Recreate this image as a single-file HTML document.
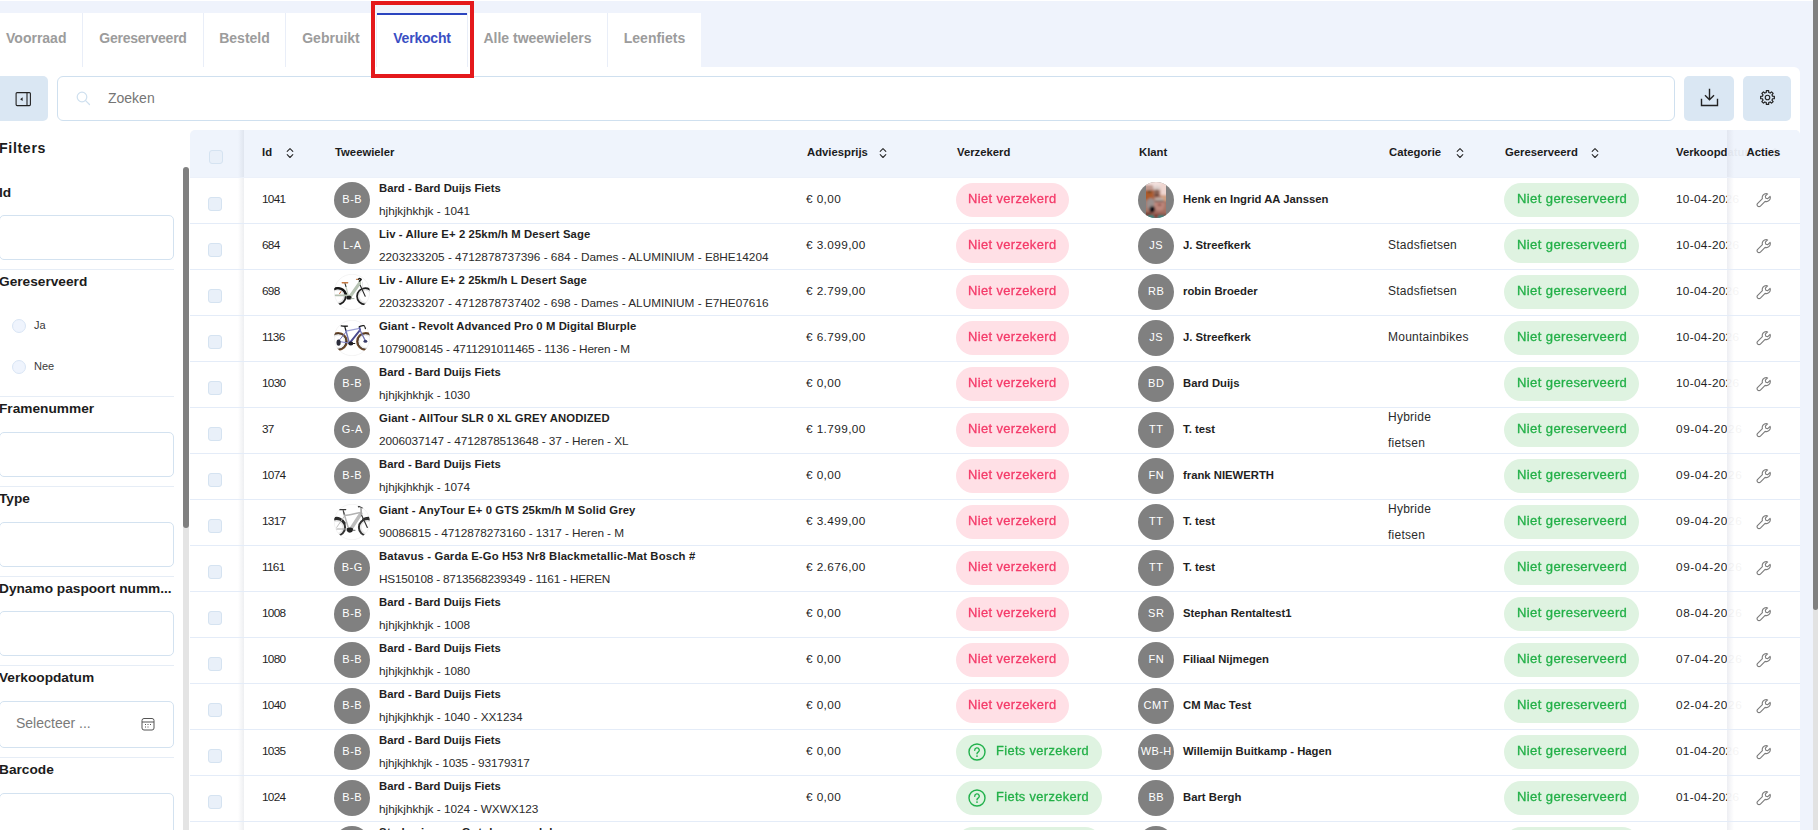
<!DOCTYPE html>
<html lang="nl"><head><meta charset="utf-8"><title>Verkocht</title>
<style>
*{box-sizing:border-box;margin:0;padding:0}
html,body{width:1818px;height:830px;overflow:hidden}
body{position:relative;background:#eff3fc;font-family:"Liberation Sans",Arial,sans-serif;color:#1f1f1f;-webkit-font-smoothing:antialiased}
.abs{position:absolute}
#topw{left:0;top:0;width:1818px;height:1px;background:#fff}
#vsb{left:1813px;top:0;width:5px;height:830px;background:#e2e2e2}
#vsb i{display:block;width:5px;height:610px;background:#808080;border-radius:0 0 3px 3px}
#tabs{left:0;top:13px;height:54px;width:701px;background:#fff;display:flex;overflow:hidden}
.tab{height:54px;border-right:1px solid #e9eef8;font-size:14px;font-weight:700;color:#9c9c9c;text-align:center;line-height:51px;white-space:nowrap;position:relative}
.tab.on{color:#3a4fc3}
.tab.on:before{content:"";position:absolute;left:0;right:0;top:0;height:2px;background:#2b45bf}
#redbox{left:371px;top:1px;width:103px;height:77px;border:4px solid #e4191c;z-index:5}
#card{left:0;top:67px;width:1800px;height:763px;background:#fff;border-radius:0 6px 0 0}
.btn{background:#dae7f3;border-radius:5px;top:76px;height:45px}
#search{left:57px;top:76px;width:1618px;height:45px;border:1px solid #cfe0ef;border-radius:6px;background:#fff}
#search span{position:absolute;left:50px;top:0;line-height:42px;font-size:14px;color:#757575}
/* sidebar */
#side{left:0;top:130px;width:182px;height:700px;overflow:hidden}
.lbl{position:absolute;left:-1px;font-weight:700;font-size:13.7px;margin-top:1px;white-space:nowrap;color:#1c1c1c}
.inp{position:absolute;left:-1px;width:175px;height:45px;border:1px solid #d3e2f0;border-radius:5px;background:#fff}
.sep{position:absolute;left:0;width:174px;height:1px;background:#e6edf6}
.rad{position:absolute;left:12px;width:14px;height:14px;border-radius:50%;background:#eff4fd;border:1px solid #d9e5f5}
.rl{position:absolute;left:34px;font-size:11px;color:#3a3a3a}
#sst{left:183px;top:170px;width:6px;height:660px;background:#e4e4e4}
#ssb{left:183px;top:167px;width:6px;height:361px;background:#808080;border-radius:3px}
/* table */
#tbl{left:190px;top:130px;width:1610px;height:700px;overflow:hidden;border-radius:5px 5px 0 0}
.th{position:relative;height:48px;background:#eff4fc;border-bottom:1px solid #ecf1fa;font-weight:700;font-size:11.3px;color:#1c1c1c}
.th .c{line-height:44px;white-space:nowrap}
.tr{position:relative;height:46px;border-bottom:1px solid #e4ecf8;background:#fff;font-size:11.8px}
.c{position:absolute;top:0;height:100%;white-space:nowrap}
.cb{left:0;width:54px;background:linear-gradient(90deg,rgba(255,255,255,0) 48px,rgba(120,130,150,.13) 54px)}
.th .cb{background:linear-gradient(90deg,rgba(234,240,250,0) 48px,rgba(120,130,150,.13) 54px)}
.chk{position:absolute;left:18px;top:19px;width:14px;height:14px;border-radius:3px;background:#e9f0f9;border:1px solid #d5e3f1}
.th .chk{left:19px;top:20px}
.id{left:72px;line-height:43px;letter-spacing:-.7px}
.tw{left:144px}
.av{position:absolute;left:0;top:4px;width:36px;height:36px;border-radius:50%;background:#808080;color:#fff;font-size:11px;font-weight:400;text-align:center;line-height:35px;letter-spacing:.5px;text-indent:.5px}
.av.sm{letter-spacing:.4px;text-indent:.4px}
.bk{position:absolute;left:0;top:4px}
.tt{position:absolute;left:45px;top:0}
.tt b{display:block;font-size:11.3px;line-height:23px;height:23px;margin-top:-1px}
.tt span{display:block;line-height:23px;color:#2b2b2b}
.pr{left:616px;line-height:43px;letter-spacing:.4px}
.vz{left:766px}
.pill{position:absolute;left:0;top:5px;height:34px;border-radius:17px;white-space:nowrap}
.pill em{position:absolute;left:12.300px;top:0;font-style:normal;display:block;line-height:33.500px;font-size:12px;letter-spacing:.35px;transform:scaleX(1.075);transform-origin:0 50%;-webkit-text-stroke:.3px currentColor}
.pill.red{background:#ffe0e6;color:#f43a69;width:113px}
.pill.grn{background:#dff3e1;color:#23b048;width:135px}
.pill.grn em{left:12.600px;transform:scaleX(1.088)}
.pill.ic{width:146px}
.pill.ic em{left:39.800px;transform:scaleX(1.066)}
.qi{position:absolute;left:12px;top:8px}
.kl{left:948px}
.kl b{position:absolute;left:45px;top:0;line-height:43px;font-size:11.3px}
.ct{left:1198px;line-height:43px;font-size:12px;letter-spacing:.25px;color:#2b2b2b}
.ct.two{line-height:26px;top:-4.200px}
.gr{left:1314px}
.dt{left:1486px;line-height:43px;letter-spacing:.3px}
.ac{left:1537px;width:73px;background:linear-gradient(90deg,rgba(236,237,242,.95),rgba(255,255,255,.95) 7px)}
.th .ac{background:linear-gradient(90deg,rgba(226,230,240,.95),rgba(239,244,252,.95) 7px)}
.wr{position:absolute;left:29.400px;top:14px}
.so{position:absolute;top:16.750px}
</style></head><body>
<div class="abs" id="topw"></div>
<div class="abs" id="tabs">
<div class="tab" style="width:92.500px;margin-left:-9.500px">Voorraad</div><div class="tab" style="width:121px;letter-spacing:-.25px">Gereserveerd</div><div class="tab" style="width:82px">Besteld</div><div class="tab" style="width:91px">Gebruikt</div><div class="tab on" style="width:91px;letter-spacing:-.2px">Verkocht</div><div class="tab" style="width:140px">Alle tweewielers</div><div class="tab" style="width:93px;border-right:0">Leenfiets</div>
</div>
<div class="abs" id="card"></div>
<div class="abs" id="redbox"></div>
<div class="abs btn" style="left:0;width:48px;border-radius:0 5px 5px 0"><svg class="abs" style="left:15px;top:15px" width="17" height="16" viewBox="0 0 17 16"><rect x="1.100" y="1.600" width="14.300" height="13" rx="1" fill="none" stroke="#222" stroke-width="1.100"/><path d="M12 1.600v13" stroke="#222" stroke-width="1.100"/><path d="M7.600 6.300v3.800l-2.500-1.900z" fill="#222"/></svg></div>
<div class="abs" id="search"><svg class="abs" style="left:18px;top:14px" width="15" height="15" viewBox="0 0 15 15"><circle cx="6" cy="6" r="4.800" fill="none" stroke="#cfe0ef" stroke-width="1.200"/><path d="M9.600 9.600 13.500 13.500" stroke="#cfe0ef" stroke-width="1.200" stroke-linecap="round"/></svg><span>Zoeken</span></div>
<div class="abs btn" style="left:1684px;width:50px"><svg class="abs" style="left:16px;top:12px" width="19" height="19" viewBox="0 0 19 19"><path d="M9.500 1.500v10M5.500 7.800l4 4 4-4M1.500 11.500v6h16v-6" fill="none" stroke="#222" stroke-width="1.400" stroke-linecap="square"/></svg></div>
<div class="abs btn" style="left:1743px;width:48px"><svg class="abs" style="left:15.500px;top:13.200px" width="17" height="17" viewBox="0 0 17 17"><circle cx="8.500" cy="8.500" r="2.250" fill="none" stroke="#222" stroke-width="1.150"/><path d="M7.250 3.450 L7.350 1.650 L9.650 1.650 L9.750 3.450 L11.200 4.050 L12.550 2.850 L14.150 4.450 L12.950 5.800 L13.550 7.250 L15.350 7.350 L15.350 9.650 L13.550 9.750 L12.950 11.200 L14.150 12.550 L12.550 14.150 L11.200 12.950 L9.750 13.550 L9.650 15.350 L7.350 15.350 L7.250 13.550 L5.800 12.950 L4.450 14.150 L2.850 12.550 L4.050 11.200 L3.450 9.750 L1.650 9.650 L1.650 7.350 L3.450 7.250 L4.050 5.800 L2.850 4.450 L4.450 2.850 L5.800 4.050Z" fill="none" stroke="#222" stroke-width="1.200" stroke-linejoin="round"/></svg></div>

<div class="abs" id="side">
<div class="lbl" style="top:9px;font-size:14.200px;letter-spacing:.65px">Filters</div>
<div class="lbl" style="top:54px">Id</div>
<div class="inp" style="top:85px"></div>
<div class="sep" style="top:139px"></div>
<div class="lbl" style="top:143px">Gereserveerd</div>
<i class="rad" style="top:189px"></i><span class="rl" style="top:189px">Ja</span>
<i class="rad" style="top:230px"></i><span class="rl" style="top:230px">Nee</span>
<div class="sep" style="top:266px"></div>
<div class="lbl" style="top:270px">Framenummer</div>
<div class="inp" style="top:302px"></div>
<div class="sep" style="top:356px"></div>
<div class="lbl" style="top:360px">Type</div>
<div class="inp" style="top:392px"></div>
<div class="sep" style="top:446px"></div>
<div class="lbl" style="top:450px">Dynamo paspoort numm...</div>
<div class="inp" style="top:481px"></div>
<div class="sep" style="top:535px"></div>
<div class="lbl" style="top:539px">Verkoopdatum</div>
<div class="inp" style="top:571px;height:47px"><span style="position:absolute;left:16px;top:0;line-height:42px;font-size:14px;color:#7a7a7a">Selecteer ...</span><svg class="abs" style="left:141px;top:15px" width="14" height="14" viewBox="0 0 14 14"><rect x="1" y="1.500" width="12" height="11.500" rx="2" fill="none" stroke="#555" stroke-width="1"/><path d="M1 5h12" stroke="#555" stroke-width="1"/><path d="M4 7.500h1M6.500 7.500h1M9 7.500h1M4 10h1M6.500 10h1" stroke="#555" stroke-width="1.100"/></svg></div>
<div class="sep" style="top:627px"></div>
<div class="lbl" style="top:631px">Barcode</div>
<div class="inp" style="top:663px"></div>
</div>
<div class="abs" id="sst"></div><div class="abs" id="ssb"></div>

<div class="abs" id="tbl">
<div class="th"><div class="c cb"><i class="chk"></i></div><div class="c" style="left:72px">Id<svg class="so" style="left:23.9px" viewBox="0 0 8 12" width="8" height="12"><path d="M1.200 4.400 4 1.600 6.800 4.400M1.200 7.700 4 10.500 6.800 7.700" fill="none" stroke="#2a2a2a" stroke-width="1.100" stroke-linecap="round" stroke-linejoin="round"/></svg></div><div class="c" style="left:145px">Tweewieler</div><div class="c" style="left:617px">Adviesprijs<svg class="so" style="left:71.7px" viewBox="0 0 8 12" width="8" height="12"><path d="M1.200 4.400 4 1.600 6.800 4.400M1.200 7.700 4 10.500 6.800 7.700" fill="none" stroke="#2a2a2a" stroke-width="1.100" stroke-linecap="round" stroke-linejoin="round"/></svg></div><div class="c" style="left:767px">Verzekerd</div><div class="c" style="left:949px">Klant</div><div class="c" style="left:1199px">Categorie<svg class="so" style="left:66.7px" viewBox="0 0 8 12" width="8" height="12"><path d="M1.200 4.400 4 1.600 6.800 4.400M1.200 7.700 4 10.500 6.800 7.700" fill="none" stroke="#2a2a2a" stroke-width="1.100" stroke-linecap="round" stroke-linejoin="round"/></svg></div><div class="c" style="left:1315px">Gereserveerd<svg class="so" style="left:85.7px" viewBox="0 0 8 12" width="8" height="12"><path d="M1.200 4.400 4 1.600 6.800 4.400M1.200 7.700 4 10.500 6.800 7.700" fill="none" stroke="#2a2a2a" stroke-width="1.100" stroke-linecap="round" stroke-linejoin="round"/></svg></div><div class="c" style="left:1486px">Verkoopdatum<svg class="so" style="left:94.6px" viewBox="0 0 8 12" width="8" height="12"><path d="M1.200 4.400 4 1.600 6.800 4.400M1.200 7.700 4 10.500 6.800 7.700" fill="none" stroke="#2a2a2a" stroke-width="1.100" stroke-linecap="round" stroke-linejoin="round"/></svg></div><div class="c ac"><span style="position:absolute;left:19.500px">Acties</span></div></div>
<div class="tr"><div class="c cb"><i class="chk"></i></div><div class="c id">1041</div><div class="c tw"><span class="av">B-B</span><div class="tt"><b>Bard - Bard Duijs Fiets</b><span>hjhjkjhkhjk - 1041</span></div></div><div class="c pr">€ 0,00</div><div class="c vz"><span class="pill red"><em>Niet verzekerd</em></span></div><div class="c kl"><svg class="bk" viewBox="0 0 36 36" width="36" height="36"><defs><clipPath id="pc"><circle cx="18" cy="18" r="18"/></clipPath><filter id="bl" x="-20%" y="-20%" width="140%" height="140%"><feGaussianBlur stdDeviation="0.8"/></filter><clipPath id="ps"><rect x="8" y="0" width="20" height="36"/></clipPath></defs>
<g clip-path="url(#pc)"><rect width="36" height="36" fill="#808080"/><g clip-path="url(#ps)"><g filter="url(#bl)">
<rect x="5" y="-3" width="26" height="42" fill="#a87565"/>
<rect x="5" y="-3" width="26" height="8.500" fill="#f2dfdc"/>
<rect x="22.300" y="1" width="9" height="12.500" fill="#efd5cf"/>
<rect x="23" y="13.500" width="8" height="5.500" fill="#d39f7e"/>
<rect x="5" y="3" width="10" height="5.500" fill="#c09a90"/>
<rect x="5" y="8.500" width="10.500" height="9.500" fill="#ad5a2a"/>
<rect x="9.800" y="8.800" width="3.400" height="1.800" fill="#3e3e26"/>
<ellipse cx="19" cy="6.200" rx="3.700" ry="2.500" fill="#dccfcc"/>
<ellipse cx="18.800" cy="10.800" rx="3" ry="3.600" fill="#a47a6b"/>
<ellipse cx="18.600" cy="12.900" rx="2.400" ry="1.900" fill="#6a463c"/>
<ellipse cx="18.600" cy="9.300" rx="2.500" ry=".8" fill="#5c403a"/>
<ellipse cx="12.800" cy="22" rx="4.300" ry="6" fill="#9a908e"/>
<ellipse cx="21.300" cy="23" rx="5.200" ry="6.300" fill="#bd877c"/>
<ellipse cx="21.300" cy="17.400" rx="4.600" ry="1.900" fill="#c4b2aa"/>
<path d="M17 19.300h8.500" stroke="#4a3834" stroke-width="1.200"/>
<ellipse cx="21.500" cy="22.800" rx="2" ry="1.100" fill="#8f4a48"/>
<ellipse cx="14.300" cy="27.500" rx="2.800" ry="3.200" fill="#0d0a12"/>
<rect x="16" y="28.800" width="12" height="4" fill="#a26a5e"/>
<rect x="5" y="30.500" width="8" height="8" fill="#6a3028"/>
<rect x="5" y="32" width="26" height="8" fill="#7d3c32"/>
<rect x="9" y="33.300" width="18" height="4" fill="#2f8a84"/>
<rect x="16" y="33" width="4" height="3" fill="#8a3c34"/>
</g></g></g></svg><b>Henk en Ingrid AA Janssen</b></div><div class="c ct"></div><div class="c gr"><span class="pill grn"><em>Niet gereserveerd</em></span></div><div class="c dt">10-04-2026</div><div class="c ac"><svg class="wr" viewBox="0 0 16 16" width="16" height="16"><path d="M10.3 1.6a4 4 0 0 0-3.9 5.1L1.7 11.4a1.9 1.9 0 0 0 2.7 2.7l4.7-4.7a4 4 0 0 0 5-5l-2.3 2.3-2-.5-.5-2 2.3-2.3a4 4 0 0 0-1.3-.3z" fill="none" stroke="#7b7b7b" stroke-width="1.1" stroke-linejoin="round"/></svg></div></div>
<div class="tr"><div class="c cb"><i class="chk"></i></div><div class="c id">684</div><div class="c tw"><span class="av">L-A</span><div class="tt"><b style="letter-spacing:0.095px">Liv - Allure E+ 2 25km/h M Desert Sage</b><span>2203233205 - 4712878737396 - 684 - Dames - ALUMINIUM - E8HE14204</span></div></div><div class="c pr">€ 3.099,00</div><div class="c vz"><span class="pill red"><em>Niet verzekerd</em></span></div><div class="c kl"><span class="av">JS</span><b>J. Streefkerk</b></div><div class="c ct">Stadsfietsen</div><div class="c gr"><span class="pill grn"><em>Niet gereserveerd</em></span></div><div class="c dt">10-04-2026</div><div class="c ac"><svg class="wr" viewBox="0 0 16 16" width="16" height="16"><path d="M10.3 1.6a4 4 0 0 0-3.9 5.1L1.7 11.4a1.9 1.9 0 0 0 2.7 2.7l4.7-4.7a4 4 0 0 0 5-5l-2.3 2.3-2-.5-.5-2 2.3-2.3a4 4 0 0 0-1.3-.3z" fill="none" stroke="#7b7b7b" stroke-width="1.1" stroke-linejoin="round"/></svg></div></div>
<div class="tr"><div class="c cb"><i class="chk"></i></div><div class="c id">698</div><div class="c tw"><svg class="bk" viewBox="0 0 36 36" width="36" height="36"><defs><clipPath id="bc"><circle cx="18" cy="18" r="17.8"/></clipPath></defs><circle cx="18" cy="18" r="17.7" fill="#fff" stroke="#e9e9e9" stroke-width=".5"/><g clip-path="url(#bc)" fill="none" stroke-linecap="round" stroke-linejoin="round">
<circle cx="3.5" cy="22.300" r="7" stroke="#e4e4e4" stroke-width="2.500"/><circle cx="31.200" cy="22.300" r="7" stroke="#e4e4e4" stroke-width="2.500"/>
<circle cx="3.500" cy="22.300" r="8.200" stroke="#1e1e1e" stroke-width="1.700"/><circle cx="31.200" cy="22.300" r="8.200" stroke="#1e1e1e" stroke-width="1.700"/>
<path d="M0 15.200c4.500-2.600 10.500-.6 12.300 5.400" stroke="#151515" stroke-width="2.200"/>
<path d="M1.500 21.300h12" stroke="#b4c0b0" stroke-width="1.800"/>
<path d="M14.200 21.500 11.300 10" stroke="#c3cdc0" stroke-width="1.300"/><path d="M11.900 12.500 11 9.500" stroke="#2a2a2a" stroke-width="1"/>
<path d="M15.800 23 25.400 9.300" stroke="#b7c3b3" stroke-width="3.200"/>
<path d="M25.600 7.500 26 11" stroke="#b7c3b3" stroke-width="2.200"/>
<path d="M26.300 11.500 31.200 22.300" stroke="#2b2b2b" stroke-width="1.100"/>
<rect x="12.300" y="21.800" width="5.200" height="3.800" rx="1.600" fill="#1a1a1a" stroke="none"/><path d="M17 24.600h3" stroke="#9aa596" stroke-width=".9"/>
<path d="M8.300 8.800h5.300" stroke="#c47a45" stroke-width="1.500"/>
<path d="M22.500 5.300h2" stroke="#c47a45" stroke-width="1.200"/><path d="M24.600 5c1.200-.8 2.300-.3 2.600.5l-1.700 1.600" stroke="#1c1c1c" stroke-width="1.500"/>
<path d="M5.700 19.500l1-1.700" stroke="#c25a2a" stroke-width="1"/>
<path d="M28.500 8v6" stroke="#d0d0d0" stroke-width=".5"/>
</g></svg><div class="tt"><b style="letter-spacing:0.075px">Liv - Allure E+ 2 25km/h L Desert Sage</b><span>2203233207 - 4712878737402 - 698 - Dames - ALUMINIUM - E7HE07616</span></div></div><div class="c pr">€ 2.799,00</div><div class="c vz"><span class="pill red"><em>Niet verzekerd</em></span></div><div class="c kl"><span class="av">RB</span><b>robin Broeder</b></div><div class="c ct">Stadsfietsen</div><div class="c gr"><span class="pill grn"><em>Niet gereserveerd</em></span></div><div class="c dt">10-04-2026</div><div class="c ac"><svg class="wr" viewBox="0 0 16 16" width="16" height="16"><path d="M10.3 1.6a4 4 0 0 0-3.9 5.1L1.7 11.4a1.9 1.9 0 0 0 2.7 2.7l4.7-4.7a4 4 0 0 0 5-5l-2.3 2.3-2-.5-.5-2 2.3-2.3a4 4 0 0 0-1.3-.3z" fill="none" stroke="#7b7b7b" stroke-width="1.1" stroke-linejoin="round"/></svg></div></div>
<div class="tr"><div class="c cb"><i class="chk"></i></div><div class="c id">1136</div><div class="c tw"><svg class="bk" viewBox="0 0 36 36" width="36" height="36"><circle cx="18" cy="18" r="17.7" fill="#fff" stroke="#e9e9e9" stroke-width=".5"/><g clip-path="url(#bc)" fill="none" stroke-linecap="round" stroke-linejoin="round">
<circle cx="4.300" cy="21.400" r="7" stroke="#ececec" stroke-width="2.500"/><circle cx="31.600" cy="21.400" r="7" stroke="#ececec" stroke-width="2.500"/>
<circle cx="4.300" cy="21.400" r="8.500" stroke="#6f4a2a" stroke-width="2"/><circle cx="31.600" cy="21.400" r="8.500" stroke="#6f4a2a" stroke-width="2"/>
<circle cx="4.300" cy="21.400" r="7.700" stroke="#2e2420" stroke-width=".7"/><circle cx="31.600" cy="21.400" r="7.700" stroke="#2e2420" stroke-width=".7"/>
<path d="M12 11.100 25.500 8.400" stroke="#9da0d3" stroke-width="1.100"/>
<path d="M15.400 23.100 11.700 10" stroke="#7376b2" stroke-width="1.500"/><path d="M11.700 10 10.800 6.500" stroke="#222" stroke-width="1.200"/>
<path d="M15.600 23.100 26 10.200" stroke="#4a4a8e" stroke-width="1.900"/>
<path d="M25.600 7.600 26.200 10.500" stroke="#5d5fae" stroke-width="1.800"/>
<path d="M26.200 10.500 31.600 21.400" stroke="#7376b2" stroke-width="1.300"/>
<path d="M15.400 23.100 4.300 21.400 12.200 11.800" stroke="#7a7cc0" stroke-width="1"/>
<path d="M7.200 5.800c2.300.6 4.200.5 6.300.3" stroke="#1d1d1d" stroke-width="1.300"/>
<path d="M25.200 6.800c1.700-1.200 3.600-1 5.300-1.400M30.500 5.400l.9 3.200" stroke="#1d1d1d" stroke-width="1.200"/>
<ellipse cx="4.600" cy="22.600" rx="2.100" ry="3.200" fill="#2a2c3a" stroke="none"/>
<ellipse cx="16.800" cy="23.400" rx="2.500" ry="2" fill="#1e1e2a" stroke="none"/><path d="M17 23.500h3.800" stroke="#1e1e1e" stroke-width="1.100"/>
<ellipse cx="31.400" cy="21.300" rx="1.900" ry="1.500" fill="#3a3d6a" stroke="none"/>
</g></svg><div class="tt"><b style="letter-spacing:0.075px">Giant - Revolt Advanced Pro 0 M Digital Blurple</b><span style="letter-spacing:-0.165px">1079008145 - 4711291011465 - 1136 - Heren - M</span></div></div><div class="c pr">€ 6.799,00</div><div class="c vz"><span class="pill red"><em>Niet verzekerd</em></span></div><div class="c kl"><span class="av">JS</span><b>J. Streefkerk</b></div><div class="c ct">Mountainbikes</div><div class="c gr"><span class="pill grn"><em>Niet gereserveerd</em></span></div><div class="c dt">10-04-2026</div><div class="c ac"><svg class="wr" viewBox="0 0 16 16" width="16" height="16"><path d="M10.3 1.6a4 4 0 0 0-3.9 5.1L1.7 11.4a1.9 1.9 0 0 0 2.7 2.7l4.7-4.7a4 4 0 0 0 5-5l-2.3 2.3-2-.5-.5-2 2.3-2.3a4 4 0 0 0-1.3-.3z" fill="none" stroke="#7b7b7b" stroke-width="1.1" stroke-linejoin="round"/></svg></div></div>
<div class="tr"><div class="c cb"><i class="chk"></i></div><div class="c id">1030</div><div class="c tw"><span class="av">B-B</span><div class="tt"><b>Bard - Bard Duijs Fiets</b><span>hjhjkjhkhjk - 1030</span></div></div><div class="c pr">€ 0,00</div><div class="c vz"><span class="pill red"><em>Niet verzekerd</em></span></div><div class="c kl"><span class="av">BD</span><b>Bard Duijs</b></div><div class="c ct"></div><div class="c gr"><span class="pill grn"><em>Niet gereserveerd</em></span></div><div class="c dt">10-04-2026</div><div class="c ac"><svg class="wr" viewBox="0 0 16 16" width="16" height="16"><path d="M10.3 1.6a4 4 0 0 0-3.9 5.1L1.7 11.4a1.9 1.9 0 0 0 2.7 2.7l4.7-4.7a4 4 0 0 0 5-5l-2.3 2.3-2-.5-.5-2 2.3-2.3a4 4 0 0 0-1.3-.3z" fill="none" stroke="#7b7b7b" stroke-width="1.1" stroke-linejoin="round"/></svg></div></div>
<div class="tr"><div class="c cb"><i class="chk"></i></div><div class="c id">37</div><div class="c tw"><span class="av">G-A</span><div class="tt"><b style="letter-spacing:0.115px">Giant - AllTour SLR 0 XL GREY ANODIZED</b><span style="letter-spacing:-0.07px">2006037147 - 4712878513648 - 37 - Heren - XL</span></div></div><div class="c pr">€ 1.799,00</div><div class="c vz"><span class="pill red"><em>Niet verzekerd</em></span></div><div class="c kl"><span class="av">TT</span><b>T. test</b></div><div class="c ct two">Hybride<br>fietsen</div><div class="c gr"><span class="pill grn"><em>Niet gereserveerd</em></span></div><div class="c dt" style="letter-spacing:.6px">09-04-2026</div><div class="c ac"><svg class="wr" viewBox="0 0 16 16" width="16" height="16"><path d="M10.3 1.6a4 4 0 0 0-3.9 5.1L1.7 11.4a1.9 1.9 0 0 0 2.7 2.7l4.7-4.7a4 4 0 0 0 5-5l-2.3 2.3-2-.5-.5-2 2.3-2.3a4 4 0 0 0-1.3-.3z" fill="none" stroke="#7b7b7b" stroke-width="1.1" stroke-linejoin="round"/></svg></div></div>
<div class="tr"><div class="c cb"><i class="chk"></i></div><div class="c id">1074</div><div class="c tw"><span class="av">B-B</span><div class="tt"><b>Bard - Bard Duijs Fiets</b><span>hjhjkjhkhjk - 1074</span></div></div><div class="c pr">€ 0,00</div><div class="c vz"><span class="pill red"><em>Niet verzekerd</em></span></div><div class="c kl"><span class="av">FN</span><b>frank NIEWERTH</b></div><div class="c ct"></div><div class="c gr"><span class="pill grn"><em>Niet gereserveerd</em></span></div><div class="c dt" style="letter-spacing:.6px">09-04-2026</div><div class="c ac"><svg class="wr" viewBox="0 0 16 16" width="16" height="16"><path d="M10.3 1.6a4 4 0 0 0-3.9 5.1L1.7 11.4a1.9 1.9 0 0 0 2.7 2.7l4.7-4.7a4 4 0 0 0 5-5l-2.3 2.3-2-.5-.5-2 2.3-2.3a4 4 0 0 0-1.3-.3z" fill="none" stroke="#7b7b7b" stroke-width="1.1" stroke-linejoin="round"/></svg></div></div>
<div class="tr"><div class="c cb"><i class="chk"></i></div><div class="c id">1317</div><div class="c tw"><svg class="bk" viewBox="0 0 36 36" width="36" height="36"><circle cx="18" cy="18" r="17.7" fill="#fff" stroke="#e9e9e9" stroke-width=".5"/><g clip-path="url(#bc)" fill="none" stroke-linecap="round" stroke-linejoin="round">
<circle cx="2.700" cy="23.400" r="7" stroke="#e8e8e8" stroke-width="2.500"/><circle cx="33.300" cy="23.400" r="7" stroke="#e8e8e8" stroke-width="2.500"/>
<circle cx="2.700" cy="23.400" r="8.400" stroke="#333" stroke-width="2"/><circle cx="33.300" cy="23.400" r="8.400" stroke="#333" stroke-width="2"/>
<path d="M0 14.500c4-1.300 8.500.5 10.500 4.500" stroke="#2a2a2a" stroke-width="2.400"/>
<path d="M29 15.200c2.200-1.600 5-2 8-1.300" stroke="#2a2a2a" stroke-width="1.800"/>
<path d="M2.700 25h12" stroke="#a9a9a9" stroke-width="1.200"/>
<path d="M2.700 23.400 10.500 12" stroke="#b9b9b9" stroke-width=".9"/>
<path d="M14.500 24.500 9.600 8" stroke="#b5b5b5" stroke-width="1.500"/><path d="M10.300 10.500 9.200 6.500" stroke="#444" stroke-width="1.100"/>
<path d="M10.400 11.300c5-.2 10-1.800 16.200-2.900" stroke="#b2b2b2" stroke-width="1.500"/>
<path d="M17.200 24.500 26.800 9.800" stroke="#bcbcbc" stroke-width="3.500"/>
<path d="M27 3.800 27.300 10.500" stroke="#a8a8a8" stroke-width="1.700"/>
<path d="M27.800 11.500 33.300 23.400" stroke="#3a3a3a" stroke-width="1.200"/>
<path d="M5.500 5.600h6.200" stroke="#3a3a3a" stroke-width="1.400"/>
<path d="M24.500 2.700c1.500-.2 3 .3 4.300 1" stroke="#3a3a3a" stroke-width="1.400"/>
<path d="M13 24.200c2-.9 4.400-.8 6 .3.500 1.800-.4 3.500-2.400 4.100-2 .2-3.400-.7-3.900-2z" fill="#232323" stroke="none"/><path d="M18.500 26.300h2.500" stroke="#555" stroke-width=".9"/>
</g></svg><div class="tt"><b style="letter-spacing:0.115px">Giant - AnyTour E+ 0 GTS 25km/h M Solid Grey</b><span style="letter-spacing:-0.07px">90086815 - 4712878273160 - 1317 - Heren - M</span></div></div><div class="c pr">€ 3.499,00</div><div class="c vz"><span class="pill red"><em>Niet verzekerd</em></span></div><div class="c kl"><span class="av">TT</span><b>T. test</b></div><div class="c ct two">Hybride<br>fietsen</div><div class="c gr"><span class="pill grn"><em>Niet gereserveerd</em></span></div><div class="c dt" style="letter-spacing:.6px">09-04-2026</div><div class="c ac"><svg class="wr" viewBox="0 0 16 16" width="16" height="16"><path d="M10.3 1.6a4 4 0 0 0-3.9 5.1L1.7 11.4a1.9 1.9 0 0 0 2.7 2.7l4.7-4.7a4 4 0 0 0 5-5l-2.3 2.3-2-.5-.5-2 2.3-2.3a4 4 0 0 0-1.3-.3z" fill="none" stroke="#7b7b7b" stroke-width="1.1" stroke-linejoin="round"/></svg></div></div>
<div class="tr"><div class="c cb"><i class="chk"></i></div><div class="c id">1161</div><div class="c tw"><span class="av">B-G</span><div class="tt"><b style="letter-spacing:0.15px">Batavus - Garda E-Go H53 Nr8 Blackmetallic-Mat Bosch #</b><span style="letter-spacing:-0.205px">HS150108 - 8713568239349 - 1161 - HEREN</span></div></div><div class="c pr">€ 2.676,00</div><div class="c vz"><span class="pill red"><em>Niet verzekerd</em></span></div><div class="c kl"><span class="av">TT</span><b>T. test</b></div><div class="c ct"></div><div class="c gr"><span class="pill grn"><em>Niet gereserveerd</em></span></div><div class="c dt" style="letter-spacing:.6px">09-04-2026</div><div class="c ac"><svg class="wr" viewBox="0 0 16 16" width="16" height="16"><path d="M10.3 1.6a4 4 0 0 0-3.9 5.1L1.7 11.4a1.9 1.9 0 0 0 2.7 2.7l4.7-4.7a4 4 0 0 0 5-5l-2.3 2.3-2-.5-.5-2 2.3-2.3a4 4 0 0 0-1.3-.3z" fill="none" stroke="#7b7b7b" stroke-width="1.1" stroke-linejoin="round"/></svg></div></div>
<div class="tr"><div class="c cb"><i class="chk"></i></div><div class="c id">1008</div><div class="c tw"><span class="av">B-B</span><div class="tt"><b>Bard - Bard Duijs Fiets</b><span>hjhjkjhkhjk - 1008</span></div></div><div class="c pr">€ 0,00</div><div class="c vz"><span class="pill red"><em>Niet verzekerd</em></span></div><div class="c kl"><span class="av">SR</span><b>Stephan Rentaltest1</b></div><div class="c ct"></div><div class="c gr"><span class="pill grn"><em>Niet gereserveerd</em></span></div><div class="c dt" style="letter-spacing:.6px">08-04-2026</div><div class="c ac"><svg class="wr" viewBox="0 0 16 16" width="16" height="16"><path d="M10.3 1.6a4 4 0 0 0-3.9 5.1L1.7 11.4a1.9 1.9 0 0 0 2.7 2.7l4.7-4.7a4 4 0 0 0 5-5l-2.3 2.3-2-.5-.5-2 2.3-2.3a4 4 0 0 0-1.3-.3z" fill="none" stroke="#7b7b7b" stroke-width="1.1" stroke-linejoin="round"/></svg></div></div>
<div class="tr"><div class="c cb"><i class="chk"></i></div><div class="c id">1080</div><div class="c tw"><span class="av">B-B</span><div class="tt"><b>Bard - Bard Duijs Fiets</b><span>hjhjkjhkhjk - 1080</span></div></div><div class="c pr">€ 0,00</div><div class="c vz"><span class="pill red"><em>Niet verzekerd</em></span></div><div class="c kl"><span class="av">FN</span><b>Filiaal Nijmegen</b></div><div class="c ct"></div><div class="c gr"><span class="pill grn"><em>Niet gereserveerd</em></span></div><div class="c dt" style="letter-spacing:.6px">07-04-2026</div><div class="c ac"><svg class="wr" viewBox="0 0 16 16" width="16" height="16"><path d="M10.3 1.6a4 4 0 0 0-3.9 5.1L1.7 11.4a1.9 1.9 0 0 0 2.7 2.7l4.7-4.7a4 4 0 0 0 5-5l-2.3 2.3-2-.5-.5-2 2.3-2.3a4 4 0 0 0-1.3-.3z" fill="none" stroke="#7b7b7b" stroke-width="1.1" stroke-linejoin="round"/></svg></div></div>
<div class="tr"><div class="c cb"><i class="chk"></i></div><div class="c id">1040</div><div class="c tw"><span class="av">B-B</span><div class="tt"><b>Bard - Bard Duijs Fiets</b><span>hjhjkjhkhjk - 1040 - XX1234</span></div></div><div class="c pr">€ 0,00</div><div class="c vz"><span class="pill red"><em>Niet verzekerd</em></span></div><div class="c kl"><span class="av">CMT</span><b>CM Mac Test</b></div><div class="c ct"></div><div class="c gr"><span class="pill grn"><em>Niet gereserveerd</em></span></div><div class="c dt" style="letter-spacing:.6px">02-04-2026</div><div class="c ac"><svg class="wr" viewBox="0 0 16 16" width="16" height="16"><path d="M10.3 1.6a4 4 0 0 0-3.9 5.1L1.7 11.4a1.9 1.9 0 0 0 2.7 2.7l4.7-4.7a4 4 0 0 0 5-5l-2.3 2.3-2-.5-.5-2 2.3-2.3a4 4 0 0 0-1.3-.3z" fill="none" stroke="#7b7b7b" stroke-width="1.1" stroke-linejoin="round"/></svg></div></div>
<div class="tr"><div class="c cb"><i class="chk"></i></div><div class="c id">1035</div><div class="c tw"><span class="av">B-B</span><div class="tt"><b>Bard - Bard Duijs Fiets</b><span style="letter-spacing:-0.12px">hjhjkjhkhjk - 1035 - 93179317</span></div></div><div class="c pr">€ 0,00</div><div class="c vz"><span class="pill grn ic"><svg class="qi" viewBox="0 0 18 18" width="18" height="18"><circle cx="9" cy="9" r="8" fill="none" stroke="#22b14c" stroke-width="1.4"/><path d="M6.7 7.2a2.3 2.3 0 1 1 3.4 2c-.7.4-1.1.8-1.1 1.6" fill="none" stroke="#22b14c" stroke-width="1.4" stroke-linecap="round"/><circle cx="9" cy="13.1" r=".9" fill="#22b14c"/></svg><em>Fiets verzekerd</em></span></div><div class="c kl"><span class="av sm">WB-H</span><b>Willemijn Buitkamp - Hagen</b></div><div class="c ct"></div><div class="c gr"><span class="pill grn"><em>Niet gereserveerd</em></span></div><div class="c dt">01-04-2026</div><div class="c ac"><svg class="wr" viewBox="0 0 16 16" width="16" height="16"><path d="M10.3 1.6a4 4 0 0 0-3.9 5.1L1.7 11.4a1.9 1.9 0 0 0 2.7 2.7l4.7-4.7a4 4 0 0 0 5-5l-2.3 2.3-2-.5-.5-2 2.3-2.3a4 4 0 0 0-1.3-.3z" fill="none" stroke="#7b7b7b" stroke-width="1.1" stroke-linejoin="round"/></svg></div></div>
<div class="tr"><div class="c cb"><i class="chk"></i></div><div class="c id">1024</div><div class="c tw"><span class="av">B-B</span><div class="tt"><b>Bard - Bard Duijs Fiets</b><span>hjhjkjhkhjk - 1024 - WXWX123</span></div></div><div class="c pr">€ 0,00</div><div class="c vz"><span class="pill grn ic"><svg class="qi" viewBox="0 0 18 18" width="18" height="18"><circle cx="9" cy="9" r="8" fill="none" stroke="#22b14c" stroke-width="1.4"/><path d="M6.7 7.2a2.3 2.3 0 1 1 3.4 2c-.7.4-1.1.8-1.1 1.6" fill="none" stroke="#22b14c" stroke-width="1.4" stroke-linecap="round"/><circle cx="9" cy="13.1" r=".9" fill="#22b14c"/></svg><em>Fiets verzekerd</em></span></div><div class="c kl"><span class="av">BB</span><b>Bart Bergh</b></div><div class="c ct"></div><div class="c gr"><span class="pill grn"><em>Niet gereserveerd</em></span></div><div class="c dt">01-04-2026</div><div class="c ac"><svg class="wr" viewBox="0 0 16 16" width="16" height="16"><path d="M10.3 1.6a4 4 0 0 0-3.9 5.1L1.7 11.4a1.9 1.9 0 0 0 2.7 2.7l4.7-4.7a4 4 0 0 0 5-5l-2.3 2.3-2-.5-.5-2 2.3-2.3a4 4 0 0 0-1.3-.3z" fill="none" stroke="#7b7b7b" stroke-width="1.1" stroke-linejoin="round"/></svg></div></div>
<div class="tr"><div class="c cb"><i class="chk"></i></div><div class="c id">1023</div><div class="c tw"><span class="av">S-G</span><div class="tt"><b style="letter-spacing:0.4px">Stadswinger - Gotcha e-model</b><span>hjhjkjhkhjk - 1023</span></div></div><div class="c pr">€ 0,00</div><div class="c vz"><span class="pill grn ic"><svg class="qi" viewBox="0 0 18 18" width="18" height="18"><circle cx="9" cy="9" r="8" fill="none" stroke="#22b14c" stroke-width="1.4"/><path d="M6.7 7.2a2.3 2.3 0 1 1 3.4 2c-.7.4-1.1.8-1.1 1.6" fill="none" stroke="#22b14c" stroke-width="1.4" stroke-linecap="round"/><circle cx="9" cy="13.1" r=".9" fill="#22b14c"/></svg><em>Fiets verzekerd</em></span></div><div class="c kl"><span class="av">BB</span><b>Bart Bergh</b></div><div class="c ct"></div><div class="c gr"><span class="pill grn"><em>Niet gereserveerd</em></span></div><div class="c dt">01-04-2026</div><div class="c ac"><svg class="wr" viewBox="0 0 16 16" width="16" height="16"><path d="M10.3 1.6a4 4 0 0 0-3.9 5.1L1.7 11.4a1.9 1.9 0 0 0 2.7 2.7l4.7-4.7a4 4 0 0 0 5-5l-2.3 2.3-2-.5-.5-2 2.3-2.3a4 4 0 0 0-1.3-.3z" fill="none" stroke="#7b7b7b" stroke-width="1.1" stroke-linejoin="round"/></svg></div></div>
</div>
<div class="abs" id="vsb"><i></i></div>
</body></html>
